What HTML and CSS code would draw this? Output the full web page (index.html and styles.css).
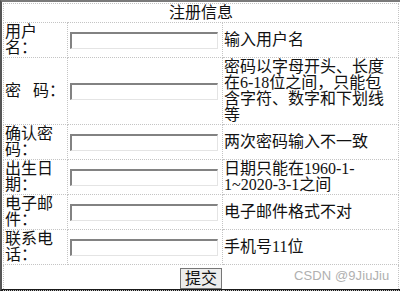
FILE: index.html
```html
<!DOCTYPE html>
<html lang="zh-CN">
<head>
<meta charset="utf-8">
<title>注册信息</title>
<link rel="stylesheet" href="styles.css">
</head>
<body>
<div class="frame">
  <table class="form">
    <colgroup>
      <col class="c-label">
      <col class="c-input">
      <col class="c-hint">
    </colgroup>
    <tr><td colspan="3" class="title">注册信息</td></tr>
    <tr>
      <td class="label">用户名：</td>
      <td class="field"><input type="text" class="box"></td>
      <td class="hint">输入用户名</td>
    </tr>
    <tr>
      <td class="label">密&nbsp;&nbsp;&nbsp;码：</td>
      <td class="field"><input type="password" class="box"></td>
      <td class="hint">密码以字母开头、长度在6-18位之间，只能包含字符、数字和下划线等</td>
    </tr>
    <tr>
      <td class="label">确认密码：</td>
      <td class="field"><input type="password" class="box"></td>
      <td class="hint">两次密码输入不一致</td>
    </tr>
    <tr>
      <td class="label">出生日期：</td>
      <td class="field"><input type="text" class="box"></td>
      <td class="hint">日期只能在1960-1-1~2020-3-1之间</td>
    </tr>
    <tr>
      <td class="label">电子邮件：</td>
      <td class="field"><input type="text" class="box"></td>
      <td class="hint">电子邮件格式不对</td>
    </tr>
    <tr>
      <td class="label">联系电话：</td>
      <td class="field"><input type="text" class="box"></td>
      <td class="hint">手机号11位</td>
    </tr>
    <tr><td colspan="3" class="submit"><button type="submit" class="btn">提交</button></td></tr>
  </table>
  <div class="watermark">CSDN @9JiuJiu</div>
</div>
</body>
</html>
```

FILE: styles.css
```css
html, body {
  margin: 0;
  padding: 0;
  background: #fff;
}

.frame {
  position: relative;
  width: 400px;
  height: 291px;
  box-sizing: border-box;
  border-top: 2px solid #7a7a7a;
  border-left: 2px solid #555;
  border-bottom: 2px solid #1a1a1a;
  padding: 1px 0 0 1px;
  font-family: "Liberation Serif", "Noto Sans CJK SC", serif;
  font-size: 16px;
  color: #111;
}

.form {
  width: 395px;
  table-layout: fixed;
  border-collapse: collapse;
}

.c-label { width: 64px; }
.c-input { width: 155px; }
.c-hint { width: 176px; }

.form td {
  border: 1px dotted #c4c4c4;
  padding: 1px 1px;
  line-height: 16px;
  vertical-align: middle;
}

.form td.title {
  text-align: center;
  padding: 1px 0;
}

.form td.field {
  padding: 1px 2px;
}

.box {
  display: block;
  width: 148px;
  height: 17px;
  box-sizing: border-box;
  margin: 0;
  padding: 0;
  border-style: solid;
  border-width: 2px 1px 1px 2px;
  border-color: #828282 #e4e4e4 #e4e4e4 #828282;
  background: #fff;
}

.form td.submit {
  text-align: center;
  padding: 3px 0 0;
  height: 22px;
  vertical-align: top;
}

.btn {
  font-family: "Liberation Serif", "Noto Sans CJK SC", serif;
  font-size: 16px;
  line-height: 17px;
  padding: 1px 4px;
  margin: 0;
  border: 1px solid #767676;
  border-radius: 0;
  background: #ececec;
  color: #111;
}

.watermark {
  position: absolute;
  left: 292px;
  top: 266px;
  font-family: "Liberation Sans", Arial, sans-serif;
  font-size: 13px;
  color: #b0b0b0;
  letter-spacing: 0.1px;
}
```
